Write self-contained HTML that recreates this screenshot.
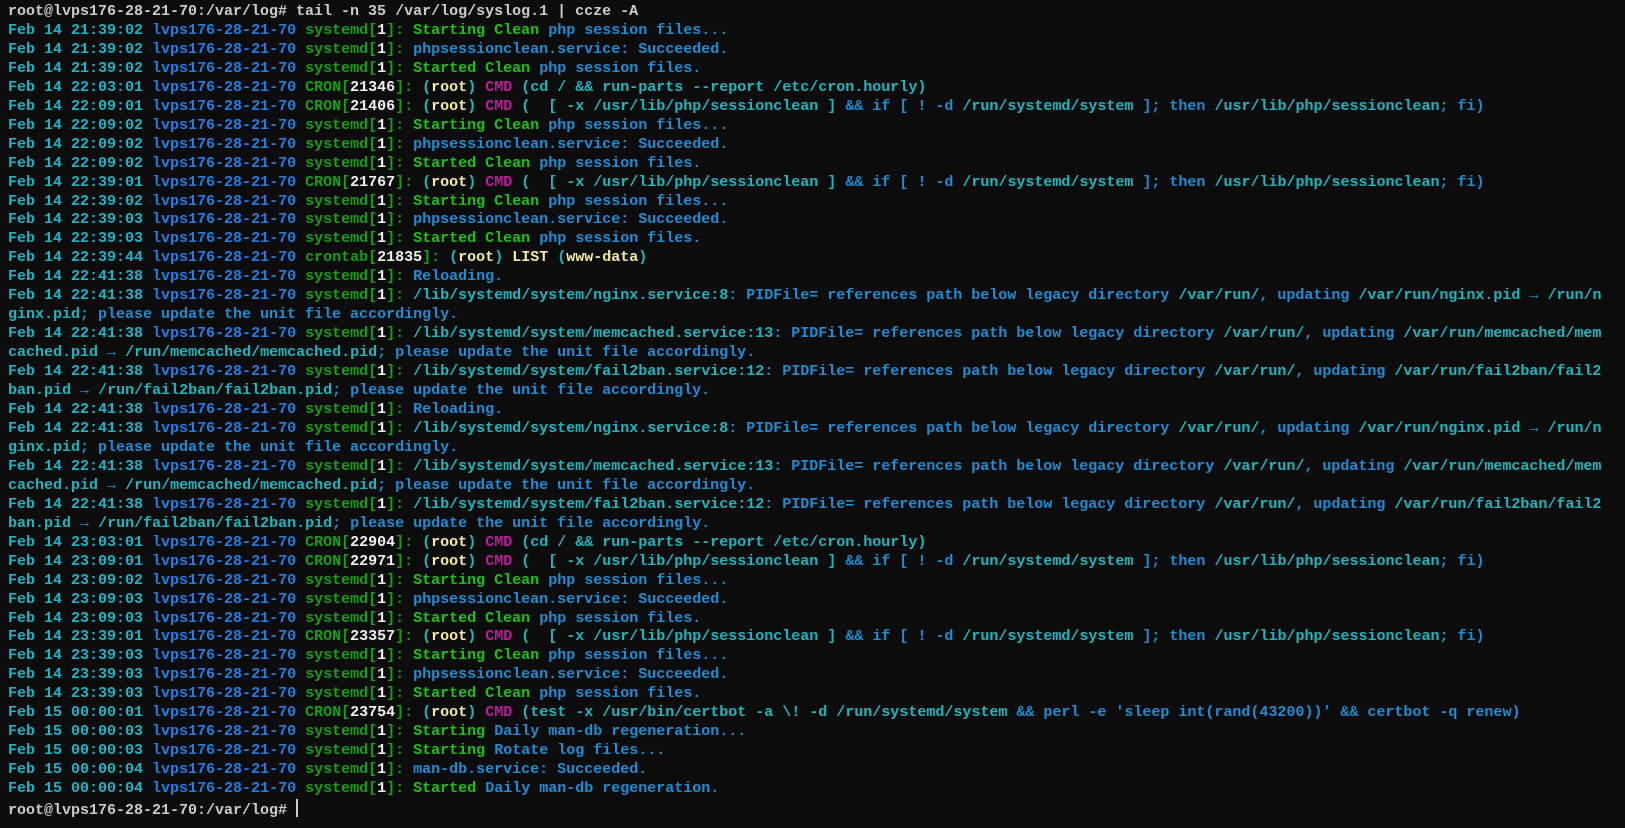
<!DOCTYPE html>
<html><head><meta charset="utf-8"><style>
html,body{margin:0;padding:0;background:#0c0c0c;width:1625px;height:828px;overflow:hidden}
pre{margin:0;padding:3px 0 0 8px;font-family:"Liberation Mono","DejaVu Sans Mono",monospace;font-size:15px;line-height:18.95px;color:#cccccc;font-weight:bold;white-space:pre}
i{font-style:normal}
.d{color:#17b6c9}.h{color:#1f7fe6}.g{color:#13a10e}.G{color:#16c60c}.b{color:#1a8fd6}.c{color:#18b8c0}.w{color:#f2f2f2}.y{color:#f4eaa0}.m{color:#c4189f}
.cur{display:inline-block;width:2px;height:18px;background:#ccc;vertical-align:-3px}
</style></head><body><pre>root@lvps176-28-21-70:/var/log# tail -n 35 /var/log/syslog.1 | ccze -A
<i class=d>Feb 14 21:39:02</i> <i class=h>lvps176-28-21-70</i> <i class=g>systemd[<i class=w>1</i>]:</i> <i class=G>Starting Clean</i> <i class=b>php session files...</i>
<i class=d>Feb 14 21:39:02</i> <i class=h>lvps176-28-21-70</i> <i class=g>systemd[<i class=w>1</i>]:</i> <i class=b>phpsessionclean.service: Succeeded.</i>
<i class=d>Feb 14 21:39:02</i> <i class=h>lvps176-28-21-70</i> <i class=g>systemd[<i class=w>1</i>]:</i> <i class=G>Started Clean</i> <i class=b>php session files.</i>
<i class=d>Feb 14 22:03:01</i> <i class=h>lvps176-28-21-70</i> <i class=g>CRON[<i class=w>21346</i>]:</i> <i class=c>(</i><i class=y>root</i><i class=c>)</i> <i class=m>CMD</i> <i class=c>(cd / &amp;&amp; run-parts --report /etc/cron.hourly)</i>
<i class=d>Feb 14 22:09:01</i> <i class=h>lvps176-28-21-70</i> <i class=g>CRON[<i class=w>21406</i>]:</i> <i class=c>(</i><i class=y>root</i><i class=c>)</i> <i class=m>CMD</i> <i class=c>(  [ -x /usr/lib/php/sessionclean ]</i> <i class=b>&amp;&amp; if [ ! -d</i> <i class=c>/run/systemd/system</i> <i class=b>]; then</i> <i class=c>/usr/lib/php/sessionclean</i><i class=b>; fi)</i>
<i class=d>Feb 14 22:09:02</i> <i class=h>lvps176-28-21-70</i> <i class=g>systemd[<i class=w>1</i>]:</i> <i class=G>Starting Clean</i> <i class=b>php session files...</i>
<i class=d>Feb 14 22:09:02</i> <i class=h>lvps176-28-21-70</i> <i class=g>systemd[<i class=w>1</i>]:</i> <i class=b>phpsessionclean.service: Succeeded.</i>
<i class=d>Feb 14 22:09:02</i> <i class=h>lvps176-28-21-70</i> <i class=g>systemd[<i class=w>1</i>]:</i> <i class=G>Started Clean</i> <i class=b>php session files.</i>
<i class=d>Feb 14 22:39:01</i> <i class=h>lvps176-28-21-70</i> <i class=g>CRON[<i class=w>21767</i>]:</i> <i class=c>(</i><i class=y>root</i><i class=c>)</i> <i class=m>CMD</i> <i class=c>(  [ -x /usr/lib/php/sessionclean ]</i> <i class=b>&amp;&amp; if [ ! -d</i> <i class=c>/run/systemd/system</i> <i class=b>]; then</i> <i class=c>/usr/lib/php/sessionclean</i><i class=b>; fi)</i>
<i class=d>Feb 14 22:39:02</i> <i class=h>lvps176-28-21-70</i> <i class=g>systemd[<i class=w>1</i>]:</i> <i class=G>Starting Clean</i> <i class=b>php session files...</i>
<i class=d>Feb 14 22:39:03</i> <i class=h>lvps176-28-21-70</i> <i class=g>systemd[<i class=w>1</i>]:</i> <i class=b>phpsessionclean.service: Succeeded.</i>
<i class=d>Feb 14 22:39:03</i> <i class=h>lvps176-28-21-70</i> <i class=g>systemd[<i class=w>1</i>]:</i> <i class=G>Started Clean</i> <i class=b>php session files.</i>
<i class=d>Feb 14 22:39:44</i> <i class=h>lvps176-28-21-70</i> <i class=g>crontab[<i class=w>21835</i>]:</i> <i class=c>(</i><i class=y>root</i><i class=c>)</i> <i class=y>LIST</i> <i class=c>(</i><i class=y>www-data</i><i class=c>)</i>
<i class=d>Feb 14 22:41:38</i> <i class=h>lvps176-28-21-70</i> <i class=g>systemd[<i class=w>1</i>]:</i> <i class=b>Reloading.</i>
<i class=d>Feb 14 22:41:38</i> <i class=h>lvps176-28-21-70</i> <i class=g>systemd[<i class=w>1</i>]:</i> <i class=c>/lib/systemd/system/nginx.service:8</i><i class=b>: PIDFile= references path below legacy directory</i> <i class=c>/var/run/</i><i class=b>, updating</i> <i class=c>/var/run/nginx.pid</i> <i class=b>→</i> <i class=c>/run/n
ginx.pid</i><i class=b>; please update the unit file accordingly.</i>
<i class=d>Feb 14 22:41:38</i> <i class=h>lvps176-28-21-70</i> <i class=g>systemd[<i class=w>1</i>]:</i> <i class=c>/lib/systemd/system/memcached.service:13</i><i class=b>: PIDFile= references path below legacy directory</i> <i class=c>/var/run/</i><i class=b>, updating</i> <i class=c>/var/run/memcached/mem
cached.pid</i> <i class=b>→</i> <i class=c>/run/memcached/memcached.pid</i><i class=b>; please update the unit file accordingly.</i>
<i class=d>Feb 14 22:41:38</i> <i class=h>lvps176-28-21-70</i> <i class=g>systemd[<i class=w>1</i>]:</i> <i class=c>/lib/systemd/system/fail2ban.service:12</i><i class=b>: PIDFile= references path below legacy directory</i> <i class=c>/var/run/</i><i class=b>, updating</i> <i class=c>/var/run/fail2ban/fail2
ban.pid</i> <i class=b>→</i> <i class=c>/run/fail2ban/fail2ban.pid</i><i class=b>; please update the unit file accordingly.</i>
<i class=d>Feb 14 22:41:38</i> <i class=h>lvps176-28-21-70</i> <i class=g>systemd[<i class=w>1</i>]:</i> <i class=b>Reloading.</i>
<i class=d>Feb 14 22:41:38</i> <i class=h>lvps176-28-21-70</i> <i class=g>systemd[<i class=w>1</i>]:</i> <i class=c>/lib/systemd/system/nginx.service:8</i><i class=b>: PIDFile= references path below legacy directory</i> <i class=c>/var/run/</i><i class=b>, updating</i> <i class=c>/var/run/nginx.pid</i> <i class=b>→</i> <i class=c>/run/n
ginx.pid</i><i class=b>; please update the unit file accordingly.</i>
<i class=d>Feb 14 22:41:38</i> <i class=h>lvps176-28-21-70</i> <i class=g>systemd[<i class=w>1</i>]:</i> <i class=c>/lib/systemd/system/memcached.service:13</i><i class=b>: PIDFile= references path below legacy directory</i> <i class=c>/var/run/</i><i class=b>, updating</i> <i class=c>/var/run/memcached/mem
cached.pid</i> <i class=b>→</i> <i class=c>/run/memcached/memcached.pid</i><i class=b>; please update the unit file accordingly.</i>
<i class=d>Feb 14 22:41:38</i> <i class=h>lvps176-28-21-70</i> <i class=g>systemd[<i class=w>1</i>]:</i> <i class=c>/lib/systemd/system/fail2ban.service:12</i><i class=b>: PIDFile= references path below legacy directory</i> <i class=c>/var/run/</i><i class=b>, updating</i> <i class=c>/var/run/fail2ban/fail2
ban.pid</i> <i class=b>→</i> <i class=c>/run/fail2ban/fail2ban.pid</i><i class=b>; please update the unit file accordingly.</i>
<i class=d>Feb 14 23:03:01</i> <i class=h>lvps176-28-21-70</i> <i class=g>CRON[<i class=w>22904</i>]:</i> <i class=c>(</i><i class=y>root</i><i class=c>)</i> <i class=m>CMD</i> <i class=c>(cd / &amp;&amp; run-parts --report /etc/cron.hourly)</i>
<i class=d>Feb 14 23:09:01</i> <i class=h>lvps176-28-21-70</i> <i class=g>CRON[<i class=w>22971</i>]:</i> <i class=c>(</i><i class=y>root</i><i class=c>)</i> <i class=m>CMD</i> <i class=c>(  [ -x /usr/lib/php/sessionclean ]</i> <i class=b>&amp;&amp; if [ ! -d</i> <i class=c>/run/systemd/system</i> <i class=b>]; then</i> <i class=c>/usr/lib/php/sessionclean</i><i class=b>; fi)</i>
<i class=d>Feb 14 23:09:02</i> <i class=h>lvps176-28-21-70</i> <i class=g>systemd[<i class=w>1</i>]:</i> <i class=G>Starting Clean</i> <i class=b>php session files...</i>
<i class=d>Feb 14 23:09:03</i> <i class=h>lvps176-28-21-70</i> <i class=g>systemd[<i class=w>1</i>]:</i> <i class=b>phpsessionclean.service: Succeeded.</i>
<i class=d>Feb 14 23:09:03</i> <i class=h>lvps176-28-21-70</i> <i class=g>systemd[<i class=w>1</i>]:</i> <i class=G>Started Clean</i> <i class=b>php session files.</i>
<i class=d>Feb 14 23:39:01</i> <i class=h>lvps176-28-21-70</i> <i class=g>CRON[<i class=w>23357</i>]:</i> <i class=c>(</i><i class=y>root</i><i class=c>)</i> <i class=m>CMD</i> <i class=c>(  [ -x /usr/lib/php/sessionclean ]</i> <i class=b>&amp;&amp; if [ ! -d</i> <i class=c>/run/systemd/system</i> <i class=b>]; then</i> <i class=c>/usr/lib/php/sessionclean</i><i class=b>; fi)</i>
<i class=d>Feb 14 23:39:03</i> <i class=h>lvps176-28-21-70</i> <i class=g>systemd[<i class=w>1</i>]:</i> <i class=G>Starting Clean</i> <i class=b>php session files...</i>
<i class=d>Feb 14 23:39:03</i> <i class=h>lvps176-28-21-70</i> <i class=g>systemd[<i class=w>1</i>]:</i> <i class=b>phpsessionclean.service: Succeeded.</i>
<i class=d>Feb 14 23:39:03</i> <i class=h>lvps176-28-21-70</i> <i class=g>systemd[<i class=w>1</i>]:</i> <i class=G>Started Clean</i> <i class=b>php session files.</i>
<i class=d>Feb 15 00:00:01</i> <i class=h>lvps176-28-21-70</i> <i class=g>CRON[<i class=w>23754</i>]:</i> <i class=c>(</i><i class=y>root</i><i class=c>)</i> <i class=m>CMD</i> <i class=c>(test -x /usr/bin/certbot -a \! -d /run/systemd/system</i> <i class=b>&amp;&amp; perl -e 'sleep int(rand(43200))' &amp;&amp; certbot -q renew)</i>
<i class=d>Feb 15 00:00:03</i> <i class=h>lvps176-28-21-70</i> <i class=g>systemd[<i class=w>1</i>]:</i> <i class=G>Starting</i> <i class=b>Daily man-db regeneration...</i>
<i class=d>Feb 15 00:00:03</i> <i class=h>lvps176-28-21-70</i> <i class=g>systemd[<i class=w>1</i>]:</i> <i class=G>Starting</i> <i class=b>Rotate log files...</i>
<i class=d>Feb 15 00:00:04</i> <i class=h>lvps176-28-21-70</i> <i class=g>systemd[<i class=w>1</i>]:</i> <i class=b>man-db.service: Succeeded.</i>
<i class=d>Feb 15 00:00:04</i> <i class=h>lvps176-28-21-70</i> <i class=g>systemd[<i class=w>1</i>]:</i> <i class=G>Started</i> <i class=b>Daily man-db regeneration.</i>
root@lvps176-28-21-70:/var/log# <span class=cur></span></pre></body></html>
